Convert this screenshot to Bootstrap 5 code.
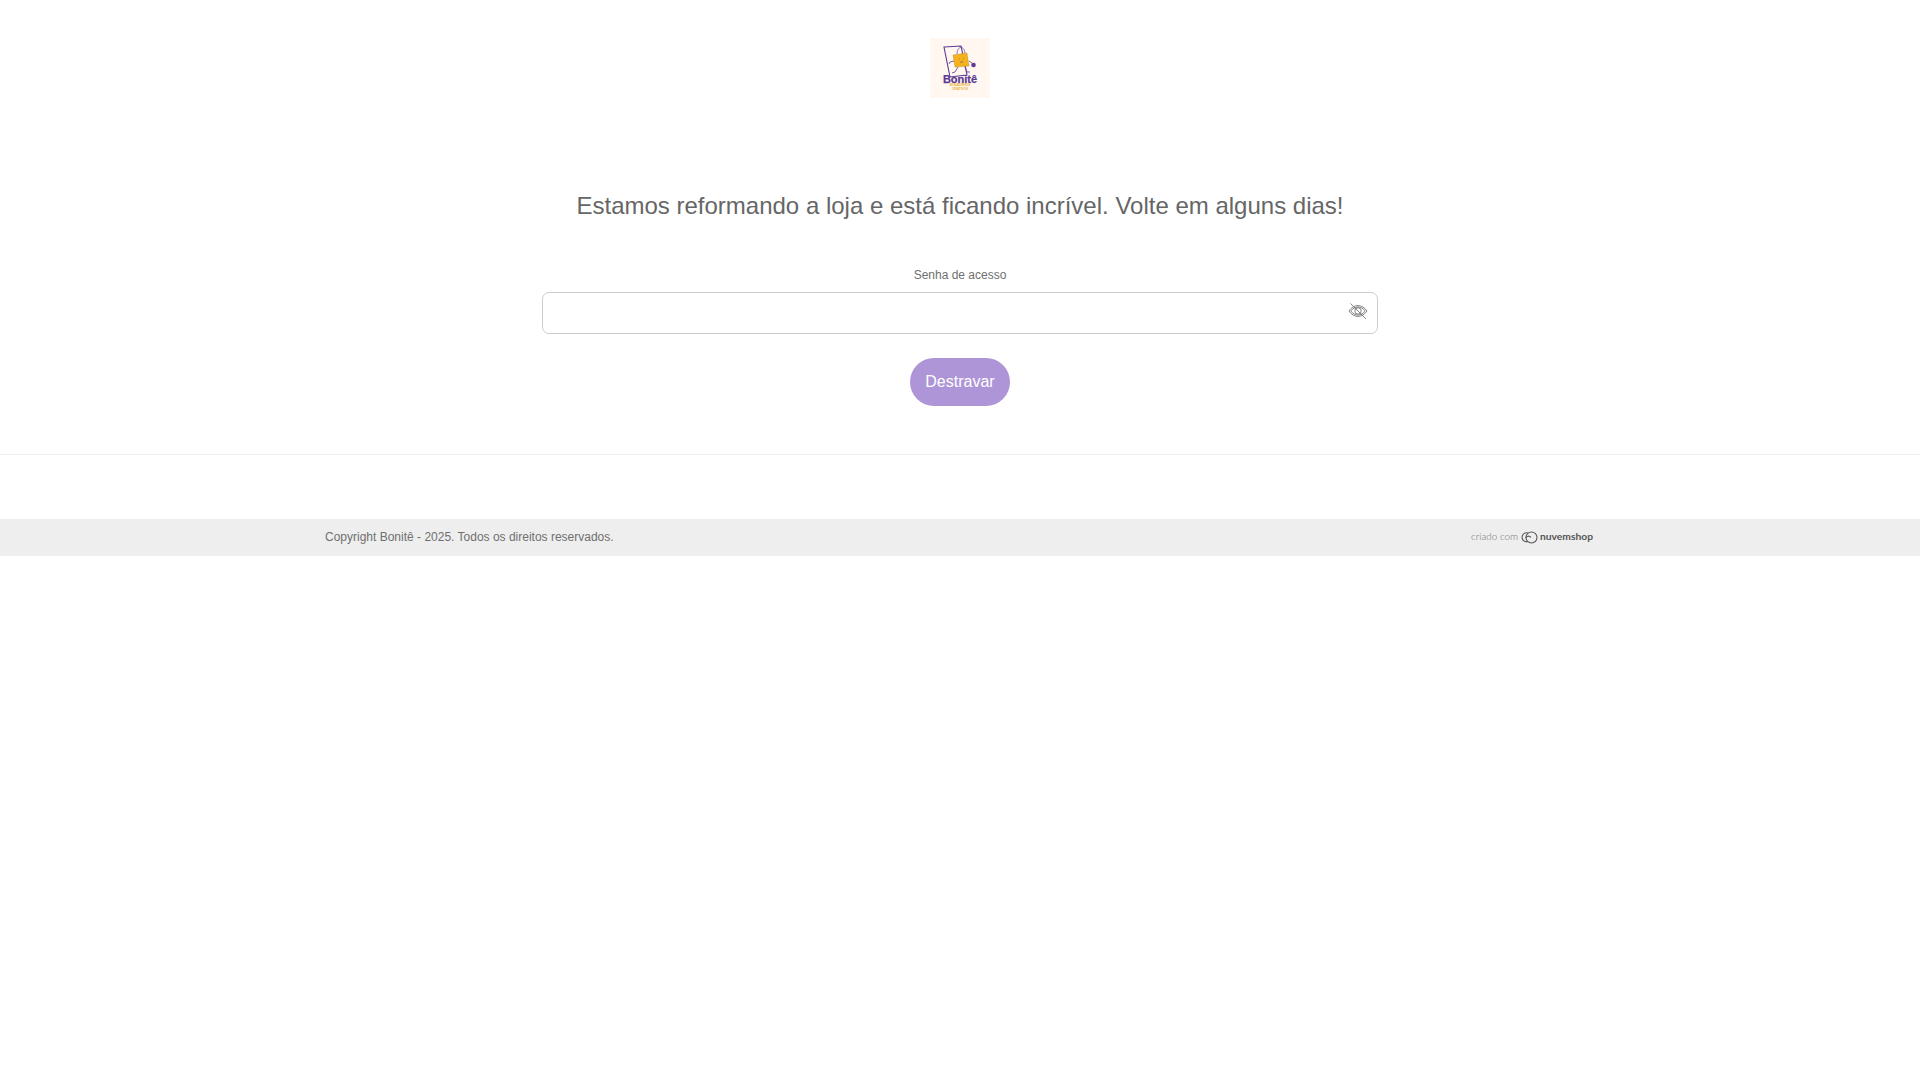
<!DOCTYPE html>
<html lang="pt">
<head>
  <meta charset="UTF-8">
  <meta name="viewport" content="width=device-width, initial-scale=1.0">
  <title>Bonitê</title>
  <link href="https://cdn.jsdelivr.net/npm/bootstrap@5.3.0/dist/css/bootstrap.min.css" rel="stylesheet">
  <style>
    body {
      font-family: "Liberation Sans", Arial, sans-serif;
      color: #666;
      background: #fff;
    }
    .store-logo {
      display: block;
      width: 60px;
      height: 60px;
      margin: 38px auto 0;
    }
    .lock-title {
      margin: 0;
      padding-top: 94px;
      font-size: 24px;
      line-height: 28px;
      font-weight: 400;
      color: #666;
    }
    .lock-form {
      width: 836px;
      margin: 0 auto;
      padding-top: 48px;
    }
    .lock-label {
      display: block;
      font-size: 12px;
      line-height: 14px;
      margin-bottom: 10px;
      color: #707070;
    }
    .pass-wrap { height: 42px; }
    .pass-input {
      height: 42px;
      border: 1px solid #ccc;
      border-radius: 7px;
      box-shadow: none;
      padding-right: 40px;
    }
    .pass-eye {
      position: absolute;
      top: 9px;
      right: 10px;
      width: 20px;
      height: 20px;
    }
    .unlock-btn {
      width: 100px;
      height: 48px;
      margin-top: 24px;
      padding: 0;
      border: 0;
      border-radius: 24px;
      background: #ae95d7;
      color: #fff;
      font-size: 16px;
    }
    .lock-main {
      height: 417px;
      border-bottom: 1px solid #eee;
    }
    .bottom-bar {
      height: 37px;
      margin-top: 64px;
      background: #eee;
      font-size: 12px;
      color: #707070;
    }
    .bottom-inner {
      width: 1268px;
      margin-left: 325px;
      height: 35px;
    }
    .made-with {
      width: 122px;
      height: 16px;
    }
    .made-with text { font-family: Lato, "Liberation Sans", sans-serif; fill: #707070; }
    .made-with .brand-name { fill: #555; font-weight: 700; }
  </style>
</head>
<body>
  <div class="lock-main text-center">
    <svg class="store-logo" viewBox="0 0 60 60" role="img" aria-label="Bonitê">
      <rect width="60" height="60" fill="#fff7f0"/>
      <path d="M14 9l17-1 6 29-17 2z" fill="#fff7f0" stroke="#5b3a94" stroke-width="1.100"/>
      <path d="M27 16c0-8 7-9 8-1" fill="none" stroke="#5b3a94" stroke-width=".7"/>
      <path d="M23 17l14-2 2 13-14 1z" fill="#f6b21b" stroke="#8a6a30" stroke-width=".3"/>
      <path d="M29 21h.8M33 21h.8M30 24h3" stroke="#5b3a94" stroke-width=".6"/>
      <path d="M24 23l-4 1-1 2M39 23l3 2M28 29l-3 5-3 1M35 29l2 5 3 0" fill="none" stroke="#5b3a94" stroke-width=".8"/>
      <circle cx="43.500" cy="27" r="2.300" fill="#5b3a94"/>
      <text x="30" y="44.500" text-anchor="middle" font-family="Liberation Sans, sans-serif" font-weight="700" font-size="11" fill="#5b3a94" stroke="#5b3a94" stroke-width=".25">Bonitê</text>
      <text x="30" y="48.200" text-anchor="middle" font-family="Liberation Sans, sans-serif" font-weight="700" font-size="3" fill="#f0b030">BONADINHOS</text>
      <text x="30" y="52.200" text-anchor="middle" font-family="Liberation Sans, sans-serif" font-weight="700" font-size="3" fill="#f0b030">CRIATIVOS</text>
    </svg>
    <h1 class="lock-title">Estamos reformando a loja e está ficando incrível. Volte em alguns dias!</h1>
    <form class="lock-form" onsubmit="return false">
      <label class="lock-label" for="pass">Senha de acesso</label>
      <div class="pass-wrap position-relative">
        <input id="pass" type="password" class="form-control pass-input">
        <svg class="pass-eye" viewBox="0 0 20 20" fill="none" stroke="#777" stroke-width=".9">
          <path d="M1 10c2.500-3.600 5.500-5.400 9-5.400s6.500 1.800 9 5.400c-2.500 3.600-5.500 5.400-9 5.400S3.500 13.600 1 10z"/>
          <path d="M2.800 10c2-2.600 4.400-4 7.200-4s5.200 1.400 7.200 4c-2 2.600-4.400 4-7.200 4s-5.200-1.400-7.200-4z"/>
          <circle cx="10" cy="10" r="3.200"/>
          <path d="M2.500 2.500l15.500 15.500"/>
        </svg>
      </div>
      <button type="submit" class="btn unlock-btn">Destravar</button>
    </form>
  </div>
  <footer class="bottom-bar">
    <div class="bottom-inner d-flex justify-content-between align-items-center">
      <span>Copyright Bonitê - 2025. Todos os direitos reservados.</span>
      <svg class="made-with" viewBox="0 0 122 16">
        <text x="0" y="11" font-size="10" font-weight="300" textLength="47" lengthAdjust="spacingAndGlyphs">criado com</text>
        <g fill="none" stroke="#555" stroke-width="1.100">
          <path d="M57 4a4.500 4.500 0 1 0 0 8.500"/>
          <circle cx="60.500" cy="8.500" r="5.500"/>
          <path d="M54.500 9a3.200 3.200 0 0 1 5.500-.5"/>
        </g>
        <text class="brand-name" x="69" y="11" font-size="10" textLength="53" lengthAdjust="spacingAndGlyphs">nuvemshop</text>
      </svg>
    </div>
  </footer>
  <script src="https://cdn.jsdelivr.net/npm/bootstrap@5.3.0/dist/js/bootstrap.bundle.min.js"></script>
</body>
</html>
